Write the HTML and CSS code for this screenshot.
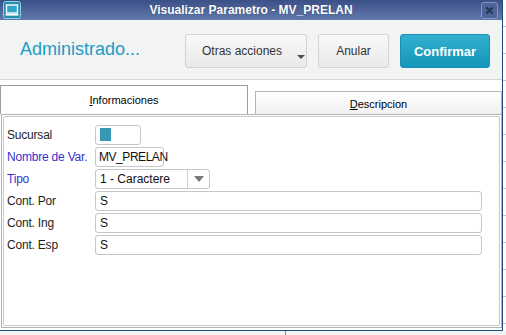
FILE: index.html
```html
<!DOCTYPE html>
<html lang="es">
<head>
    <meta charset="UTF-8">
    <title>Visualizar Parametro - MV_PRELAN</title>
    <link rel="stylesheet" href="styles.css">
</head>
<body>
    <div class="screen">
        <div class="window">
            <!-- barra de titulo -->
            <div class="titlebar">
                <svg class="app-icon" width="18" height="18" viewBox="0 0 18 18">
                    <rect x="0.5" y="0.5" width="17" height="17" rx="2" fill="#2a8db0" stroke="#8fd0e4"/>
                    <rect x="3.5" y="4" width="11" height="8" fill="#2fa3c8" stroke="#fff" stroke-width="1.4"/>
                    <rect x="2.5" y="13" width="13" height="1.6" fill="#fff"/>
                </svg>
                <div class="title">Visualizar Parametro - MV_PRELAN</div>
                <div class="close">
                    <svg width="9" height="9" viewBox="0 0 9 9">
                        <path d="M1.5 1.5 L7.5 7.5 M7.5 1.5 L1.5 7.5" stroke="#26324f" stroke-width="2"/>
                    </svg>
                </div>
            </div>

            <!-- cabecera con acciones -->
            <div class="header">
                <h1>Administrado...</h1>
                <button class="btn btn-menu">Otras acciones <span class="caret"></span></button>
                <button class="btn btn-cancel">Anular</button>
                <button class="btn btn-primary">Confirmar</button>
            </div>

            <!-- pestañas -->
            <div class="tabs">
                <div class="tab tab-active"><u>I</u>nformaciones</div>
                <div class="tab"><u>D</u>escripcion</div>
            </div>

            <div class="panel">
                <div class="panel-inner">
                    <div class="form">
                        <label>Sucursal</label>
                        <div class="field field-branch"><span class="swatch"></span></div>

                        <label class="req">Nombre de Var.</label>
                        <div class="field field-name">MV_PRELAN</div>

                        <label class="req">Tipo</label>
                        <div class="field field-select">
                            <span class="select-text">1 - Caractere</span>
                            <span class="select-arrow"></span>
                        </div>

                        <label>Cont. Por</label>
                        <div class="field field-wide">S</div>

                        <label>Cont. Ing</label>
                        <div class="field field-wide">S</div>

                        <label>Cont. Esp</label>
                        <div class="field field-wide">S</div>
                    </div>
                </div>
            </div>
        </div>
        <div class="behind"></div>
    </div>
    <div class="bottom"></div>
</body>
</html>
```

FILE: styles.css
```css
* {
    box-sizing: border-box;
}
body {
    margin: 0;
    width: 506px;
    height: 335px;
    overflow: hidden;
    font-family: "Liberation Sans", Arial, sans-serif;
    background: #eef3f5;
}
.screen {
    display: flex;
    height: 331px;
}
.window {
    width: 503px;
    background: #fff;
    border-right: 1px solid #1d4b7c;
    border-bottom: 1px solid #1d4b7c;
    display: flex;
    flex-direction: column;
}
.behind {
    flex: 1;
    background: repeating-linear-gradient(to bottom, #fff 0, #fff 26px, #c4c4c4 26px, #c4c4c4 27px);
}
.bottom {
    height: 4px;
    background: linear-gradient(to right, transparent 285px, #8c8c8c 285px, #8c8c8c 286px, transparent 286px);
}

/* barra de titulo */
.titlebar {
    height: 20px;
    display: flex;
    align-items: center;
    padding: 0 4px 0 3px;
    background: linear-gradient(#3c5088, #6079ab);
}
.title {
    flex: 1;
    text-align: center;
    color: #fff;
    font-weight: bold;
    font-size: 12px;
    text-shadow: 0 0 1px #243560;
}
.close {
    width: 17px;
    height: 17px;
    border: 1px solid #8497c3;
    border-radius: 3px;
    background: #4d639b;
    display: flex;
    align-items: center;
    justify-content: center;
}

/* cabecera */
.header {
    height: 60px;
    display: flex;
    align-items: center;
    padding: 0 12px 0 20px;
    background: #f2f3f3;
    border-bottom: 1px solid #d6d6d6;
}
.header h1 {
    flex: 1;
    margin: 0;
    font-size: 18px;
    font-weight: normal;
    color: #1d9cc4;
}
.btn {
    height: 34px;
    margin-top: 3px;
    margin-left: 11px;
    border: 1px solid #d2d2d2;
    border-radius: 3px;
    background: linear-gradient(#f8f8f8, #e9e9e9);
    font-family: "Liberation Sans", Arial, sans-serif;
    font-size: 12px;
    color: #333;
    padding: 0;
}
.btn-menu {
    width: 122px;
    margin-left: 0;
    display: flex;
    align-items: center;
    padding-left: 16px;
}
.caret {
    align-self: flex-end;
    margin: 0 0 8px 15px;
    width: 0;
    height: 0;
    border-left: 4px solid transparent;
    border-right: 4px solid transparent;
    border-top: 4px solid #4c4c4c;
}
.btn-cancel {
    width: 71px;
}
.btn-primary {
    width: 90px;
    border-color: #1a8fb1;
    background: linear-gradient(#33b0d0, #1396ba);
    color: #fff;
    font-weight: bold;
    font-size: 13px;
}

/* pestañas */
.tabs {
    margin-top: 5px;
    height: 29px;
    display: flex;
    align-items: flex-end;
}
.tab {
    width: 247px;
    height: 23px;
    margin-left: 7px;
    border: 1px solid #b4b4b4;
    border-bottom: none;
    background: linear-gradient(#fff, #f1f1f1);
    font-size: 11px;
    color: #000;
    text-align: center;
    line-height: 24px;
}
.tab-active {
    width: 248px;
    height: 29px;
    margin-left: 0;
    border-color: #9c9c9c;
    background: #fff;
    line-height: 28px;
}

/* panel */
.panel {
    width: 501px;
    height: 214px;
    margin-left: 1px;
    border: 1px solid #b2b2b2;
    padding: 1px;
}
.panel-inner {
    height: 100%;
    border: 1px solid #cacaca;
    border-radius: 2px;
    padding: 8px 4px 0 3px;
}
.form {
    display: grid;
    grid-template-columns: 88px auto;
    grid-auto-rows: 20px;
    row-gap: 2px;
    justify-items: start;
}
.form label {
    font-size: 12px;
    line-height: 20px;
    color: #1e1e1e;
    white-space: nowrap;
    letter-spacing: -0.2px;
}
.form label.req {
    color: #3232cc;
}
.field {
    height: 20px;
    border: 1px solid #c6c6c6;
    border-radius: 3px;
    background: #fff;
    padding: 0 4px;
    font-size: 12px;
    line-height: 18px;
    color: #111;
}
.field-branch {
    width: 46px;
    padding-top: 2px;
}
.swatch {
    display: block;
    width: 11px;
    height: 13px;
    background: #3798b4;
}
.field-name {
    width: 69px;
    padding: 0 1px 0 3px;
    white-space: nowrap;
    letter-spacing: -0.45px;
}
.field-select {
    width: 115px;
    display: flex;
    padding-right: 0;
}
.select-text {
    flex: 1;
}
.select-arrow {
    width: 22px;
    border-left: 1px solid #d0d0d0;
    display: flex;
    align-items: center;
    justify-content: center;
}
.select-arrow::after {
    content: "";
    width: 0;
    height: 0;
    border-left: 5px solid transparent;
    border-right: 5px solid transparent;
    border-top: 6px solid #7a7a7a;
}
.field-wide {
    width: 387px;
}
```
